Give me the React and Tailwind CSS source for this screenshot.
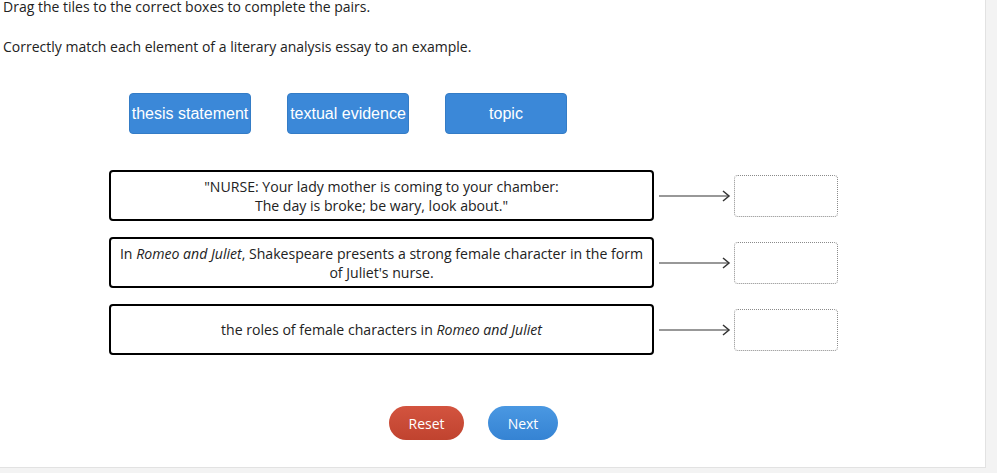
export default function App() {
  const tiles = ["thesis statement", "textual evidence", "topic"];
  const prompts = [
    <>
      "NURSE: Your lady mother is coming to your chamber:
      <br />
      The day is broke; be wary, look about."
    </>,
    <>
      In <i>Romeo and Juliet</i>, Shakespeare presents a strong female character in the form of Juliet's nurse.
    </>,
    <>
      the roles of female characters in <i>Romeo and Juliet</i>
    </>,
  ];

  return (
    <div className="w-[997px] h-[473px] bg-[#f3f3f3] overflow-hidden">
      <div
        className="w-[986px] h-[468px] bg-white border-r border-b border-[#e2e2e2] overflow-hidden text-[14px] text-[#222]"
        style={{ fontFamily: '"Open Sans", sans-serif' }}
      >
        <p className="leading-[20px] pl-[3px] -mt-[3px]">
          Drag the tiles to the correct boxes to complete the pairs.
        </p>
        <p className="leading-[20px] pl-[3px] mt-[20px]">
          Correctly match each element of a literary analysis essay to an example.
        </p>

        <div className="flex gap-[36px] ml-[129px] mt-[36px]">
          {tiles.map((tile) => (
            <div
              key={tile}
              className="w-[122px] h-[41px] flex items-center justify-center rounded-[4px] bg-[#3b88d8] border border-[#347cc6] text-white text-[16px] whitespace-nowrap"
              style={{ fontFamily: '"Liberation Sans", Arial, sans-serif' }}
            >
              {tile}
            </div>
          ))}
        </div>

        <div className="flex flex-col gap-[16px] ml-[109px] mt-[36px]">
          {prompts.map((content, index) => (
            <div key={index} className="flex items-center">
              <div className="w-[545px] h-[51px] flex items-center justify-center text-center border-2 border-black rounded-[4px] px-1 leading-[19px] text-[14.1px]">
                <div>{content}</div>
              </div>
              <svg width="80" height="14" viewBox="0 0 80 14">
                <line x1="5" y1="7" x2="75" y2="7" stroke="#333" strokeWidth="1.2" />
                <polyline points="69,2 75,7 69,12" fill="none" stroke="#333" strokeWidth="1.5" />
              </svg>
              <div className="w-[104px] h-[42px] border border-dotted border-[#8a8a8a] rounded-[4px]" />
            </div>
          ))}
        </div>

        <div className="flex gap-[24px] ml-[389px] mt-[51px]">
          <button className="w-[75px] h-[34px] rounded-full bg-gradient-to-b from-[#d3543f] to-[#c0432f] text-white text-[14px]">
            Reset
          </button>
          <button className="w-[70px] h-[34px] rounded-full bg-gradient-to-b from-[#4a98e2] to-[#3583d3] text-white text-[14px]">
            Next
          </button>
        </div>
      </div>
    </div>
  );
}
